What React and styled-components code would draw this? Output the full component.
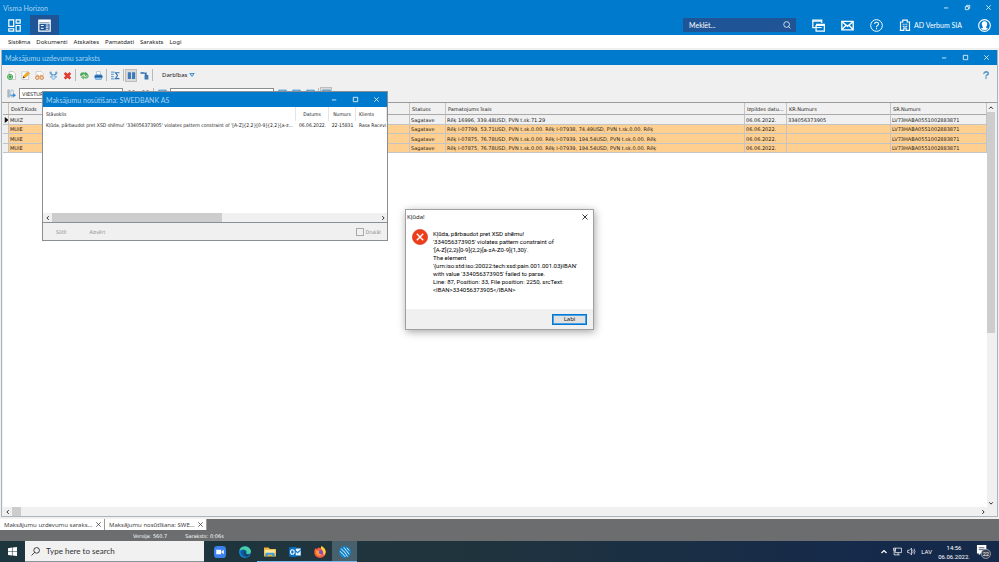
import React, { useState } from 'react';
import styled, { createGlobalStyle, css } from 'styled-components';

const colors = {
	blue: '#007acc',
	navy: '#1f5596',
	panel: '#f0f0f0',
	line: '#c4c4c4',
	orange: '#ffcf8f',
	thumb: '#cdcdcd',
};

const smallFont = "'DejaVu Sans Condensed', 'DejaVu Sans', sans-serif";
const gridFont = "'DejaVu Sans', sans-serif";
const uiFont = "'Noto Sans', 'Open Sans', sans-serif";
const messageFont = "Roboto, 'Noto Sans', sans-serif";
const titleFont = "Lato, 'Noto Sans', sans-serif";

const GlobalStyle = createGlobalStyle`
	* {
		box-sizing: border-box;
	}

	body {
		margin: 0;
		font-family: ${uiFont};
		font-size: 6px;
		color: #1b1b1b;
	}

	button,
	input {
		margin: 0;
		padding: 0;
		border: 0;
		background: none;
		font: inherit;
		color: inherit;
	}

	svg {
		display: block;
		flex: none;
	}
`;

const Page = styled.div`
	display: flex;
	flex-direction: column;
	height: 100vh;
	position: relative;
	overflow: hidden;
	background: ${colors.panel};
`;

const Header = styled.header`
	background: ${colors.blue};
	color: #fff;
	font-family: ${titleFont};
	font-size: 7px;
`;

const TitleRow = styled.div`
	display: flex;
	align-items: center;
	justify-content: space-between;
	height: 15px;
	padding-left: 3px;
	color: #a9d2ef;
`;

const WindowTitle = styled.h2`
	margin: 0;
	font-family: ${titleFont};
	font-size: 7px;
	font-weight: 400;
`;

const Controls = styled.div`
	display: flex;
	color: ${({ dark }) => (dark ? '#222' : '#fff')};
`;

const ControlButton = styled.button`
	display: flex;
	align-items: center;
	justify-content: center;
	width: ${({ narrow }) => (narrow ? '17px' : '21px')};
	height: 14px;
`;

const HeaderRow = styled.div`
	display: flex;
	align-items: center;
	gap: 1px;
	height: 20px;
`;

const ModuleButton = styled.button`
	display: flex;
	align-items: center;
	justify-content: center;
	width: 29px;
	height: 20px;
	background: ${({ active }) => (active ? colors.navy : 'transparent')};
`;

const HeaderTools = styled.div`
	display: flex;
	align-items: center;
	margin-left: auto;
	padding-right: 8px;
	gap: 16px;
`;

const SearchField = styled.label`
	display: flex;
	align-items: center;
	width: 113px;
	height: 14px;
	padding: 0 5px 0 6px;
	background: ${colors.navy};

	input {
		flex: 1;
		min-width: 0;
		font-size: 7px;

		&::placeholder {
			color: #fff;
			opacity: 1;
		}
	}
`;

const HeaderButton = styled.button`
	display: flex;
	align-items: center;
	gap: 3px;
`;

const MenuBar = styled.nav`
	display: flex;
	gap: 6px;
	height: 13px;
	padding-left: 8px;
	line-height: 14px;
	background: #fff;

	a {
		color: #222;
		text-decoration: none;
	}
`;

const Workspace = styled.main`
	display: flex;
	flex: 1;
	flex-direction: column;
	min-height: 0;
	margin: 2px 1px;
	border: 1px solid #a9b4bf;
	border-top: 0;
`;

const WindowBar = styled.div`
	display: flex;
	align-items: center;
	justify-content: space-between;
	height: 15px;
	padding-left: 3px;
	background: ${colors.blue};
	color: #a9d2ef;
`;

const Toolbar = styled.div`
	display: flex;
	align-items: center;
	height: ${({ filter }) => (filter ? '17px' : '20px')};
	padding: 0 4px 0 2px;
	font-size: 5px;
`;

const ToolButton = styled.button`
	display: flex;
	align-items: center;
	justify-content: center;
	width: 14px;
	height: 13px;

	${({ pressed }) =>
		pressed &&
		css`
			width: 12px;
			background: #dadada;
			border: 1px solid #bdbdbd;
		`}

	${({ end }) => end && 'margin-left: auto;'}
`;

const TextToolButton = styled.button`
	display: flex;
	align-items: center;
	gap: 2px;
	padding: 0 8px;
	font-size: 6px;
`;

const Separator = styled.span`
	width: 1px;
	height: 12px;
	margin: 0 1px;
	background: #b9b9b9;
`;

const FilterInput = styled.input`
	width: 104px;
	height: 11px;
	margin: 0 1px;
	padding: 0 2px;
	background: #fff;
	border: 1px solid #8d8d8d;
	font-family: ${gridFont};
	font-size: 5px;
`;

const GridArea = styled.div`
	display: flex;
	flex: 1;
	min-height: 0;
	padding: 0 2px 0 1px;
	border-top: 1px solid #9b9b9b;
`;

const GridBody = styled.div`
	flex: 1;
	min-width: 0;
	overflow: hidden;
	background: #fff;
`;

const GridFooter = styled.div`
	padding: 0 10px 0 1px;
`;

const DataTable = styled.table`
	width: 100%;
	table-layout: fixed;
	border-collapse: separate;
	border-spacing: 0;
	font-family: ${smallFont};
	font-size: 5px;
	line-height: 8px;

	th,
	td {
		padding: 0 1px;
		overflow: hidden;
		text-align: left;
		white-space: nowrap;
		font-weight: 400;
	}
`;

const PaymentTable = styled(DataTable)`
	font-family: ${gridFont};

	th {
		height: 12px;
		padding: 0 0 0 2px;
		background: ${colors.panel};
		border-right: 1px solid ${colors.line};
		border-bottom: 1px solid #a9a9a9;
	}

	td {
		border-right: 1px solid ${colors.line};
		border-bottom: 1px solid ${colors.line};
	}
`;

const PaymentRow = styled.tr`
	height: 9px;
	background: ${({ current }) => (current ? colors.panel : colors.orange)};

	&:nth-child(odd) {
		height: 10px;
	}

	td:first-child {
		padding: 0 0 0 1px;
		background: ${colors.panel};
	}
`;

const ScrollTrack = styled.div`
	display: flex;
	flex-direction: ${({ vertical }) => (vertical ? 'column' : 'row')};
	justify-content: space-between;
	align-items: center;
	flex: none;
	background: ${colors.panel};
	${({ vertical }) => (vertical ? 'width: 8px;' : 'height: 9px;')}
`;

const ScrollThumb = styled.span`
	flex: 0 0 ${({ size }) => size};
	align-self: stretch;
	margin-bottom: ${({ vertical }) => (vertical ? 'auto' : '0')};
	margin-right: ${({ vertical }) => (vertical ? '0' : 'auto')};
	background: ${colors.thumb};
`;

const ScrollButton = styled.button`
	display: flex;
	align-items: center;
	justify-content: center;
	width: 9px;
	height: 9px;
`;

const TabStrip = styled.div`
	display: flex;
	height: 12px;
	background: #6b6d6f;
`;

const DocumentTab = styled.div`
	display: flex;
	align-items: center;
	justify-content: space-between;
	width: ${({ wide }) => (wide ? '105px' : '102px')};
	height: 11px;
	padding: 0 2px 0 4px;
	background: #fff;
	border-right: 1px solid #999;
	color: #444;
`;

const StatusBar = styled.footer`
	display: flex;
	gap: 18px;
	height: 10px;
	padding-left: 133px;
	background: #6b6d6f;
	color: #fff;
	font-family: ${gridFont};
	font-size: 5px;
	line-height: 10px;
`;

const Taskbar = styled.div`
	display: flex;
	height: 21px;
	background: linear-gradient(90deg, #1d353d, #20343d 45%, #15294b 88%);
	color: #fff;
	font-family: ${messageFont};
`;

const TaskSearch = styled.label`
	display: flex;
	align-items: center;
	gap: 6px;
	width: 179px;
	margin-right: 3px;
	padding-left: 6px;
	background: #f1f1f1;
	border-bottom: 1px solid #8b9498;
	color: #222;

	input {
		flex: 1;
		min-width: 0;
		font-family: ${titleFont};
		font-size: 8px;

		&::placeholder {
			color: #333;
			opacity: 1;
		}
	}
`;

const TaskButton = styled.button`
	display: flex;
	align-items: center;
	justify-content: center;
	width: 25px;
	background: ${({ active }) => (active ? '#48606b' : 'transparent')};
	box-shadow: ${({ running }) => (running ? 'inset 0 -1px #76b9ed' : 'none')};
`;

const Tray = styled.div`
	display: flex;
	align-items: center;
	gap: 5px;
	margin-left: auto;
	padding-right: 8px;
`;

const Clock = styled.div`
	width: 34px;
	text-align: center;
	line-height: 9px;
`;

const Dialog = styled.section`
	position: absolute;
	display: flex;
	flex-direction: column;
	background: #fff;
	border: 1px solid #8a8f94;
`;

const SendDialog = styled(Dialog)`
	top: 91px;
	left: 42px;
	width: 346px;
	height: 150px;
`;

const SendList = styled.div`
	flex: 1;
	overflow: hidden;

	th {
		height: 14px;
		border-right: 1px solid #e5e5e5;
	}

	td {
		height: 8px;
	}

	th,
	td {
		padding: 0 0 0 3px;
	}

	th:nth-child(2),
	th:nth-child(3),
	td:nth-child(2),
	td:nth-child(3) {
		padding-left: 0;
		text-align: center;
	}
`;

const SendFooter = styled.div`
	display: flex;
	align-items: center;
	gap: 23px;
	height: 18px;
	padding: 0 6px 0 13px;
	background: ${colors.panel};
	border-top: 1px solid #8a8f94;
	color: #888;
	font-family: ${smallFont};
	font-size: 5px;
`;

const CheckLabel = styled.label`
	display: flex;
	align-items: center;
	gap: 2px;
	margin-left: auto;

	input {
		width: 8px;
		height: 8px;
		appearance: none;
		border: 1px solid #aaa;
	}
`;

const ErrorDialog = styled(Dialog)`
	top: 209px;
	left: 405px;
	width: 189px;
	border-color: #a0a0a0;
	box-shadow: 1px 2px 8px rgba(0, 0, 0, 0.35);
`;

const ErrorTitle = styled.div`
	display: flex;
	align-items: center;
	justify-content: space-between;
	height: 13px;
	padding-left: 1px;
`;

const ErrorBody = styled.div`
	display: flex;
	gap: 5px;
	height: 86px;
	padding: 6px 6px 0;
`;

const ErrorText = styled.p`
	margin: 1px 0 0;
	color: #000;
	font-family: ${messageFont};
	line-height: 8px;
	white-space: nowrap;
`;

const ErrorFooter = styled.div`
	display: flex;
	align-items: center;
	justify-content: flex-end;
	height: 20px;
	padding-right: 6px;
	background: ${colors.panel};
`;

const ConfirmButton = styled.button`
	width: 35px;
	height: 11px;
	background: #e1e1e1;
	border: 1px solid #0078d7;
	outline: 1px solid #4da0e0;
	outline-offset: -2px;
`;

const Svg = ({ size = 10, box = 16, children }) => (
	<svg width={size} height={size} viewBox={`0 0 ${box} ${box}`} fill="none" aria-hidden="true">
		{children}
	</svg>
);

const controlPaths = {
	minimize: 'M1 4.5H6',
	maximize: 'M1.5 1.5H6.5V6.5H1.5Z',
	restore: 'M1.5 3H5V6.5H1.5ZM3 3V1.5H6.5V5H5',
	close: 'M1.5 1.5L6.5 6.5M6.5 1.5L1.5 6.5',
};

const ControlIcon = ({ type, size = 7 }) => (
	<Svg size={size} box={8}>
		<path d={controlPaths[type]} stroke="currentColor" strokeWidth="0.9" />
	</Svg>
);

const WindowControls = ({ middle = 'maximize', narrow }) => (
	<Controls>
		{['minimize', middle, 'close'].map((type) => (
			<ControlButton key={type} narrow={narrow} aria-label={type}>
				<ControlIcon type={type} />
			</ControlButton>
		))}
	</Controls>
);

const chevrons = {
	left: 'M5 1.5L2.5 4L5 6.5',
	right: 'M3 1.5L5.5 4L3 6.5',
	up: 'M1.5 5L4 2.5L6.5 5',
	down: 'M1.5 3L4 5.5L6.5 3',
};

const Chevron = ({ to, size = 6 }) => (
	<Svg size={size} box={8}>
		<path d={chevrons[to]} stroke="currentColor" strokeWidth="1.2" />
	</Svg>
);

const Scrollbar = ({ vertical, size }) => (
	<ScrollTrack vertical={vertical}>
		<ScrollButton aria-label={vertical ? 'up' : 'left'}>
			<Chevron to={vertical ? 'up' : 'left'} />
		</ScrollButton>
		<ScrollThumb vertical={vertical} size={size} />
		<ScrollButton aria-label={vertical ? 'down' : 'right'}>
			<Chevron to={vertical ? 'down' : 'right'} />
		</ScrollButton>
	</ScrollTrack>
);

const Magnifier = ({ size, flip }) => (
	<Svg size={size}>
		{flip ? (
			<path d="M6.5 9.5L1 15M15 6A5 5 0 1 1 5 6A5 5 0 0 1 15 6Z" stroke="currentColor" strokeWidth="1.5" />
		) : (
			<path d="M11 11L15 15M13 7A5.7 5.7 0 1 1 1.5 7A5.7 5.7 0 0 1 13 7Z" stroke="currentColor" strokeWidth="1.5" />
		)}
	</Svg>
);

const Funnel = ({ size = 9 }) => (
	<Svg size={size}>
		<path d="M1 2H15L10 8V14L6 12V8Z" fill="#8fc4ee" stroke="#2f78b8" strokeWidth="1.3" />
	</Svg>
);

const toolIcons = {
	add: (
		<>
			<path d="M4 1H11L15 5V15H4Z" fill="#fff" stroke="#a8a8a8" />
			<circle cx="5.5" cy="10.5" r="4.5" fill="#fff" stroke="#239a32" strokeWidth="1.6" />
			<path d="M5.5 7.5V13.5M2.5 10.5H8.5" stroke="#239a32" strokeWidth="2.4" />
		</>
	),
	edit: (
		<>
			<path d="M1.5 1.5H13.5V15H1.5Z" fill="#fff" stroke="#aaa" />
			<path d="M3.5 12.5L5 8L12 1.5L15.5 4.5L8.5 11Z" fill="#f5ad25" stroke="#cf8a2a" strokeWidth="0.8" />
			<path d="M3 13L4.5 9.5L7 12Z" fill="#433" />
		</>
	),
	view: (
		<>
			<path d="M2 14V1H11L14.5 4.5V14Z" fill="#fff" stroke="#b4b4b4" />
			<path d="M2 10L4 7H6L7 10H9L10 7H12L14 10" stroke="#d9965c" strokeWidth="1.5" />
			<circle cx="4" cy="12" r="3" fill="#f8d7b7" stroke="#cf8040" strokeWidth="1.5" />
			<circle cx="12" cy="12" r="3" fill="#f8d7b7" stroke="#cf8040" strokeWidth="1.5" />
		</>
	),
	post: (
		<>
			<path d="M3 2V5L8 8L13 5V2" stroke="#5c92c3" strokeWidth="2" />
			<path d="M5.5 6.5H10.5V10H14L8 15.5L2 10H5.5Z" fill="#bfe0f8" stroke="#4a8fc8" />
			<circle cx="3" cy="3" r="2.2" fill="#6fa9d8" />
			<circle cx="13" cy="3" r="2.2" fill="#6fa9d8" />
		</>
	),
	remove: (
		<>
			<path d="M3 3.5L13 13.5M13 3.5L3 13.5" stroke="#df2f25" strokeWidth="4.6" />
			<path d="M4 4.5L12 12.5M12 4.5L4 12.5" stroke="#ff8a78" strokeWidth="1" strokeDasharray="1.5 1.5" />
		</>
	),
	refresh: (
		<>
			<path d="M0 8C0 3 5 1 9 3.5V1L15 6L9 9.5V7C6 5.5 4 6.5 3.5 9Z" fill="#4da75b" />
			<path d="M16 8C16 13 11 15 7 12.5V15.5L1 10.5L7 7.5V9.5C10 11 12 10 12.5 7Z" fill="#7abb79" />
		</>
	),
	print: (
		<>
			<path d="M4 7L5 1H11L12 7" fill="#fff" stroke="#8fa2b5" />
			<path d="M1 9L3 6H13L15 9V13H1Z" fill="#3b80c6" />
			<path d="M1 9.5H15" stroke="#1d4f86" strokeWidth="1.5" />
			<path d="M3 12H13V15H3Z" fill="#b5dcf7" stroke="#3b80c6" />
		</>
	),
	sum: (
		<>
			<path d="M0 2H6M0 6H5M0 10H5M0 14H6" stroke="#6ba3d3" strokeWidth="1.8" />
			<path d="M15 3H8L11.5 8L8 13.5H15" stroke="#2f74b3" strokeWidth="2" />
		</>
	),
	columns: <path d="M1.5 2H7V14H1.5ZM9 2H14.5V14H9Z" fill="#3d78b9" />,
	exit: (
		<>
			<path d="M1 2H7V5H1Z" fill="#3c77b5" />
			<path d="M7 3.5H11V10M9 8H14V14H9Z" stroke="#3c77b5" strokeWidth="1.8" fill="#3c77b5" />
		</>
	),
	send: (
		<>
			<path d="M1 1H3V15H1ZM4 1H5V15H4Z" fill="#8c9ba8" />
			<path d="M7 2H11V14H7Z" fill="#fff" stroke="#7294b4" />
			<path d="M6 10H11V7L16 11L11 15V12H6Z" fill="#338bd2" />
		</>
	),
	binoculars: <path d="M1 14V7L3 2H6V14ZM10 2H13L15 7V14H10ZM6 6H10V9H6Z" fill="#707070" />,
};

const Tool = ({ name, label, ...rest }) => (
	<ToolButton aria-label={label || name} {...rest}>
		{name === 'funnel' ? <Funnel /> : <Svg size={9}>{toolIcons[name]}</Svg>}
	</ToolButton>
);

const headerIcons = {
	windows: (
		<>
			<path d="M4 10.5H1V1.5H12V5" stroke="#fff" strokeWidth="1.5" />
			<path d="M1 2.5H12M5 8H15.2V15H5ZM5 6.5H15.2V8" stroke="#fff" strokeWidth="1.5" />
			<path d="M4 10.5H12" stroke="#fff" strokeWidth="1.2" />
		</>
	),
	mail: <path d="M1 3H15V13.5H1ZM1 3L8 9L15 3M1 13L6 8M15 13L10 8" stroke="#fff" strokeWidth="1.6" />,
	help: (
		<>
			<circle cx="8" cy="8" r="7.2" stroke="#fff" strokeWidth="1.2" />
			<path d="M5.7 6C5.7 3.3 10.5 3.2 10.5 6C10.5 7.8 8 7.8 8 10M8 11.2V12.7" stroke="#fff" strokeWidth="1.3" />
		</>
	),
	building: (
		<>
			<path d="M2 15V4H5V1.5H11V4H14V15M1 15.2H6.5V12H9.5V15.2H15" stroke="#fff" strokeWidth="1.5" />
			<path d="M5 7H11M5 9.8H11" stroke="#fff" strokeWidth="1.5" strokeDasharray="1.4 0.9" />
		</>
	),
	user: (
		<>
			<circle cx="8" cy="8" r="7.2" stroke="#fff" strokeWidth="1.4" />
			<path d="M8 2.8C10.5 2.8 11.7 4.5 11.3 7C11 8.6 10 9.4 9.8 10.5L12.5 12C10 14 6 14 3.5 12L6.2 10.5C6 9.4 5 8.6 4.7 7C4.3 4.5 5.5 2.8 8 2.8Z" fill="#fff" />
		</>
	),
};

const taskIcons = {
	zoom: (
		<>
			<rect width="16" height="16" rx="4.5" fill="#3b82ed" />
			<path d="M3 5H9.5V11H3ZM10.2 7.2L13 5V11L10.2 8.8Z" fill="#fff" />
		</>
	),
	edge: (
		<>
			<circle cx="8" cy="8" r="8" fill="#1683c9" />
			<path d="M.6 6C2-1 14-2 16 7C15.7 11 11 11 9.7 9.5C12 6 6 3 .6 6Z" fill="#4bd1a0" />
			<path d="M2 8C3 4 9 4 10 7.5L8.8 10C10 12 13 12 15 11C12 17 4 16 2 8Z" fill="#0b59a5" />
			<path d="M8 7C6 9 7 13 11 13.5L15 11C13 12 10 12 9.2 10Z" fill="#203c47" />
		</>
	),
	files: (
		<>
			<path d="M0 2H6L8 4H16V14H0Z" fill="#efb738" />
			<path d="M1 5H15V11H1Z" fill="#ffe6a0" />
			<path d="M2 9H14V14H11V11.5H5V14H2Z" fill="#419bd8" />
		</>
	),
	outlook: (
		<>
			<path d="M7 3H16V13H7Z" fill="#e9f5ff" stroke="#1983d3" />
			<path d="M7 5L11.5 9L16 5" stroke="#1983d3" strokeWidth="1.5" />
			<path d="M0 2L9 1V15L0 14Z" fill="#0870c2" />
			<ellipse cx="4.5" cy="8" rx="2.4" ry="3" stroke="#fff" strokeWidth="1.5" />
		</>
	),
	firefox: (
		<>
			<path d="M2 3L4 4L6 2L9 3L10 0C14 3 16 5 15.5 9C15 18 1 18 .5 9C.3 6 1 4 2 3Z" fill="#ff593e" />
			<path d="M10 0C14 3 16 5 15.5 9L13 13C13 8 11 5 9 3Z" fill="#ffd43b" />
			<circle cx="8" cy="9" r="4" fill="#884cc1" />
			<path d="M2 6L8 6C5 8 7 12 11 11C8 15 2 13 2 6Z" fill="#ff9b30" />
		</>
	),
	horizon: (
		<>
			<circle cx="8" cy="8" r="8" fill="#1682c8" />
			<path
				d="M3 3.5L6 7M6.5 2L10 6.5M10.5 2.5L13.5 6M1.5 7L5 11M6 6.5L10 11.5M10 6.5L13.5 11M5 10.5L8.5 14.5M9.5 11.5L11.5 14"
				stroke="#d9f0ff"
				strokeWidth="1.3"
			/>
		</>
	),
};

const payments = [
	{ id: 1, code: 'MUIZ', reason: 'Rēķ 16996, 339.48USD, PVN t.sk.71.29', account: '334056373905' },
	{ id: 2, code: 'MUIE', reason: 'Rēķ I-07799, 53.71USD, PVN t.sk.0.00. Rēķ I-07938, 74.49USD, PVN t.sk.0.00. Rēķ' },
	{ id: 3, code: 'MUIE', reason: 'Rēķ I-07875, 76.78USD, PVN t.sk.0.00. Rēķ I-07939, 194.54USD, PVN t.sk.0.00. Rēķ' },
	{ id: 4, code: 'MUIE', reason: 'Rēķ I-07875, 76.78USD, PVN t.sk.0.00. Rēķ I-07939, 194.54USD, PVN t.sk.0.00. Rēķ' },
];

const errorLines = [
	'Kļūda, pārbaudot pret XSD shēmu!',
	"'334056373905' violates pattern constraint of",
	"'[A-Z]{2,2}[0-9]{2,2}[a-zA-Z0-9]{1,30}'.",
	'The element',
	"'{urn:iso:std:iso:20022:tech:xsd:pain.001.001.03}IBAN'",
	"with value '334056373905' failed to parse.",
	'Line: 87, Position: 33, File position: 2250, srcText:',
	'<IBAN>334056373905</IBAN>',
];

const Columns = ({ widths }) => (
	<colgroup>
		{widths.map((width, index) => (
			<col key={index} width={width} />
		))}
	</colgroup>
);

const AppHeader = () => (
	<Header>
		<TitleRow>
			<span>Visma Horizon</span>
			<WindowControls middle="restore" />
		</TitleRow>
		<HeaderRow>
			<ModuleButton aria-label="Modules">
				<Svg size={13}>
					<path d="M1 1H7V9H1ZM10 1H15V5H10ZM1 12H7V15H1ZM10 8H15V15H10Z" stroke="#fff" strokeWidth="1.5" />
				</Svg>
			</ModuleButton>
			<ModuleButton active aria-label="Documents">
				<Svg size={13}>
					<path d="M1 1.5H15V15H1ZM1 3H15M1 5H15" stroke="#fff" strokeWidth="1.5" />
					<path d="M3.5 8H7M3.5 11.5H7M9.5 7.5H13M9.5 10H13M9.5 12.5H13" stroke="#fff" strokeWidth="1.3" />
				</Svg>
			</ModuleButton>
			<HeaderTools>
				<SearchField>
					<input type="search" placeholder="Meklēt..." aria-label="Meklēt" />
					<Magnifier size={8} />
				</SearchField>
				{['windows', 'mail', 'help'].map((name) => (
					<HeaderButton key={name} aria-label={name}>
						<Svg size={13}>{headerIcons[name]}</Svg>
					</HeaderButton>
				))}
				<HeaderButton>
					<Svg size={12}>{headerIcons.building}</Svg>
					AD Verbum SIA
				</HeaderButton>
				<HeaderButton aria-label="user">
					<Svg size={13}>{headerIcons.user}</Svg>
				</HeaderButton>
			</HeaderTools>
		</HeaderRow>
	</Header>
);

const Toolbars = () => (
	<>
		<Toolbar>
			{['add', 'edit', 'view', 'post', 'remove'].map((name) => (
				<Tool key={name} name={name} />
			))}
			<Separator />
			<Tool name="refresh" />
			<Tool name="print" />
			<Separator />
			<Tool name="sum" />
			<Separator />
			<Tool name="columns" pressed />
			<Tool name="exit" />
			<Separator />
			<TextToolButton>
				Darbības
				<Svg size={6} box={8}>
					<path d="M1 2H7L4 6Z" fill="#9ed0f4" stroke="#2f7fc0" />
				</Svg>
			</TextToolButton>
			<ToolButton end aria-label="help">
				<Svg size={8}>
					<path d="M4 6C3 1 13 0 12.5 5.5C12 8 8 8 8 11M8 12.5V15.5" stroke="#5c9acb" strokeWidth="3.2" />
				</Svg>
			</ToolButton>
		</Toolbar>
		<Toolbar filter>
			<Tool name="send" />
			<FilterInput defaultValue="VIESTURDANA | Citu maksājumu" aria-label="Skats" />
			<Tool name="binoculars" />
			<Tool name="binoculars" label="next" />
			<Separator />
			<Tool name="funnel" />
			<FilterInput defaultValue="000000 | Saraksts 000000" aria-label="Filtrs" />
			<Tool name="funnel" label="filter add" />
			<Tool name="funnel" label="filter edit" />
			<Tool name="funnel" label="filter clear" />
			<Separator />
			<Tool name="funnel" label="filter on" pressed />
		</Toolbar>
	</>
);

const PaymentGrid = () => (
	<GridArea>
		<GridBody>
			<PaymentTable>
				<Columns widths={[6, 34, 367, 36, undefined, 42, 104, 96]} />
				<thead>
					<tr>
						<th />
						<th>DokT.Kods</th>
						<th />
						<th>Statuss</th>
						<th>Pamatojums īsais</th>
						<th>Izpildes datu...</th>
						<th>KR.Numurs</th>
						<th>SR.Numurs</th>
					</tr>
				</thead>
				<tbody>
					{payments.map(({ id, code, reason, account }) => (
						<PaymentRow key={id} current={id === 1}>
							<td>
								{id === 1 && (
									<Svg size={6} box={8}>
										<path d="M1 0L6 4L1 8Z" fill="#111" />
									</Svg>
								)}
							</td>
							<td>{code}</td>
							<td />
							<td>Sagatave</td>
							<td>{reason}</td>
							<td>06.06.2022.</td>
							<td>{account}</td>
							<td>LV73HABA0551002883871</td>
						</PaymentRow>
					))}
				</tbody>
			</PaymentTable>
		</GridBody>
		<Scrollbar vertical size="221px" />
	</GridArea>
);

const SendWindow = () => (
	<SendDialog aria-labelledby="send-title">
		<WindowBar>
			<WindowTitle id="send-title">Maksājumu nosūtīšana: SWEDBANK AS</WindowTitle>
			<WindowControls />
		</WindowBar>
		<SendList>
			<DataTable>
				<Columns widths={[undefined, 33, 27, 31]} />
				<thead>
					<tr>
						<th>Stāvoklis</th>
						<th>Datums</th>
						<th>Numurs</th>
						<th>Klients</th>
					</tr>
				</thead>
				<tbody>
					<tr>
						<td>{"Kļūda, pārbaudot pret XSD shēmu! '334056373905' violates pattern constraint of '[A-Z]{2,2}[0-9]{2,2}[a-z..."}</td>
						<td>06.06.2022.</td>
						<td>22-15831</td>
						<td>Rasa Racevi</td>
					</tr>
				</tbody>
			</DataTable>
		</SendList>
		<Scrollbar size="170px" />
		<SendFooter>
			<button disabled>Sūtīt</button>
			<button disabled>Aizvērt</button>
			<CheckLabel>
				<input type="checkbox" disabled />
				Drukāt
			</CheckLabel>
		</SendFooter>
	</SendDialog>
);

const ErrorWindow = ({ onClose }) => (
	<ErrorDialog role="alertdialog" aria-labelledby="error-title">
		<ErrorTitle>
			<span id="error-title">Kļūda!</span>
			<Controls dark>
				<ControlButton narrow aria-label="close" onClick={onClose}>
					<ControlIcon type="close" size={8} />
				</ControlButton>
			</Controls>
		</ErrorTitle>
		<ErrorBody>
			<Svg size={16}>
				<circle cx="8" cy="8" r="7.6" fill="#ee3d1b" stroke="#c83418" strokeWidth="0.6" />
				<path d="M4.8 4.8L11.2 11.2M11.2 4.8L4.8 11.2" stroke="#fff" strokeWidth="1.4" />
			</Svg>
			<ErrorText>
				{errorLines.map((line) => (
					<React.Fragment key={line}>
						{line}
						<br />
					</React.Fragment>
				))}
			</ErrorText>
		</ErrorBody>
		<ErrorFooter>
			<ConfirmButton onClick={onClose}>Labi</ConfirmButton>
		</ErrorFooter>
	</ErrorDialog>
);

const SystemTaskbar = () => (
	<Taskbar>
		<TaskButton aria-label="Start">
			<Svg size={9}>
				<path d="M0 2L7 1V7.5H0ZM8 1L16 0V7.5H8ZM0 8.5H7V15L0 14ZM8 8.5H16V16L8 15Z" fill="#fff" />
			</Svg>
		</TaskButton>
		<TaskSearch>
			<Magnifier size={9} flip />
			<input type="search" placeholder="Type here to search" aria-label="Type here to search" />
		</TaskSearch>
		{Object.keys(taskIcons).map((name, index) => (
			<TaskButton key={name} active={name === 'horizon'} running={index > 1} aria-label={name}>
				<Svg size={12}>{taskIcons[name]}</Svg>
			</TaskButton>
		))}
		<Tray>
			<Chevron to="up" size={8} />
			<Svg size={9}>
				<path d="M4 2H15V10H4ZM9 10V14M6 14H12M1 2H4V6H1ZM2 6V14H6" stroke="#fff" strokeWidth="1.3" />
			</Svg>
			<Svg size={9}>
				<path d="M1 6H4L8 2V14L4 10H1ZM10 5Q12 8 10 11M12.5 3Q16 8 12.5 13" stroke="#fff" strokeWidth="1.2" />
			</Svg>
			<span>LAV</span>
			<Clock>
				14:56
				<br />
				06.06.2022.
			</Clock>
			<Svg size={15}>
				<path d="M1 1H11V10H5L3 12V10H1Z" fill="#fff" />
				<path d="M3 4H9M3 6H9" stroke="#53617a" />
				<circle cx="10.5" cy="10.5" r="5" fill="#3b4454" stroke="#b9bfc9" strokeWidth="0.7" />
				<text x="10.5" y="12.8" fill="#fff" fontSize="6" textAnchor="middle">22</text>
			</Svg>
		</Tray>
	</Taskbar>
);

const App = () => {
	const [errorOpen, setErrorOpen] = useState(true);

	return (
		<Page>
			<GlobalStyle />
			<AppHeader />
			<MenuBar>
				{['Sistēma', 'Dokumenti', 'Atskaites', 'Pamatdati', 'Saraksts', 'Logi'].map((item) => (
					<a key={item} href="#menu">
						{item}
					</a>
				))}
			</MenuBar>
			<Workspace>
				<WindowBar>
					<WindowTitle>Maksājumu uzdevumu saraksts</WindowTitle>
					<WindowControls />
				</WindowBar>
				<Toolbars />
				<PaymentGrid />
				<GridFooter>
					<Scrollbar size="9px" />
				</GridFooter>
			</Workspace>
			<TabStrip>
				<DocumentTab wide>
					Maksājumu uzdevumu saraks...
					<ControlIcon type="close" />
				</DocumentTab>
				<DocumentTab>
					Maksājumu nosūtīšana: SWE...
					<ControlIcon type="close" />
				</DocumentTab>
			</TabStrip>
			<StatusBar>
				<span>Versija: 560.7</span>
				<span>Saraksts: 0:06s</span>
			</StatusBar>
			<SystemTaskbar />
			<SendWindow />
			{errorOpen && <ErrorWindow onClose={() => setErrorOpen(false)} />}
		</Page>
	);
};

export default App;
